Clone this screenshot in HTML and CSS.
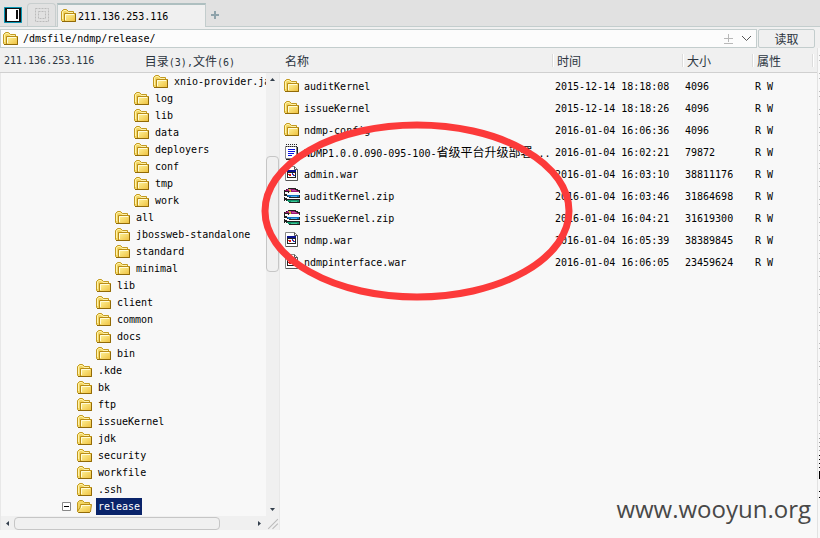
FILE: index.html
```html
<!DOCTYPE html>
<html lang="zh-CN">
<head>
<meta charset="utf-8">
<title>211.136.253.116</title>
<link rel="stylesheet" href="styles.css">
</head>
<body>
<svg class="defs" aria-hidden="true">
  <defs>
    <linearGradient id="gold" x1="0" y1="0" x2="1" y2="1"><stop offset="0" stop-color="#fff6a0"/><stop offset="1" stop-color="#eebf3c"/></linearGradient>
    <symbol id="folder" viewBox="0 0 16 16">
      <path d="M.5 12.500V3.500L2.500 1.500H5.500L7.500 3.500H12.500V5.500H14.500V13.500H1.500Z" fill="#f2d562" stroke="#c39a20"/>
      <path d="M1.500 11V4L3 2.500H5L7 4.500H12" fill="none" stroke="#fff3ac"/>
      <path d="M3.500 5.500H14.500V13.500H3.500Z" fill="url(#gold)" stroke="#b98c14"/>
      <path d="M4.500 12V6.500H13" fill="none" stroke="#fffbd8"/>
      <path d="M1 13.500H14.500V6" fill="none" stroke="#916a08"/>
    </symbol>
    <symbol id="folder-open" viewBox="0 0 16 16">
      <path d="M.5 12.500V3.500L2.500 1.500H5.500L7.500 3.500H12.500V6" fill="#f2d562" stroke="#c39a20"/>
      <path d="M3.500 6.500V5.500H14.500L13.500 12.500L12.500 13.500H1.500L.5 12.500L3 8.500Z" fill="url(#gold)" stroke="#b98c14"/>
      <path d="M4.500 9V6.500H13" fill="none" stroke="#fffbd8"/>
      <path d="M1.500 13.500H12.500L13.500 12.500" fill="none" stroke="#916a08"/>
    </symbol>
    <symbol id="doc" viewBox="0 0 16 16">
      <path d="M1.500 2.500H12.500V12L10 14.500H1.500Z" fill="#fff" stroke="#888"/>
      <path d="M13.500 3V12L10.500 15.500H2" fill="none" stroke="#222"/>
      <path d="M2 .5H13M2 2.500H13" stroke="#222" stroke-dasharray="1 1"/>
      <path d="M4 5.500H11M4 7.500H11M4 9.500H10M4 11.500H8" stroke="#0a12e0"/>
    </symbol>
    <symbol id="war" viewBox="0 0 16 16">
      <path d="M1.500 .5H10.500L13.500 3.500V14.500H1.500Z" fill="#fff" stroke="#888"/>
      <path d="M10.500 .5V3.500H13.500V14.500H2" fill="none" stroke="#555"/>
      <path d="M3 4H12V12H3Z" fill="#222"/>
      <path d="M4 7H11V11H4Z" fill="#fff"/>
      <path d="M3 4H12V6H3Z" fill="#0a1290"/>
      <path d="M4 8H5V9H4ZM5 8H7V10H5ZM9 8H10V9H9Z" fill="#e01818"/>
      <path d="M8 7H9V9H8ZM9 9H11V10H9Z" fill="#1739c8"/>
    </symbol>
    <symbol id="rar" viewBox="0 0 16 16" shape-rendering="crispEdges">
      <path d="M0 2H2V1H4V0H12V1H14V2H16V5H4V4H2V5H1V6H3V7H16V10H4V9H1V10H3V11H16V15H5V14H2V13H0V9H1V8H0Z" fill="#222"/>
      <path d="M1 2H3V1H11V2H13V3H15V4H5V3H1Z" fill="#9c1870"/>
      <path d="M5 7H15V9H5L2 7Z" fill="#1070c0"/>
      <path d="M5 12H15V14H5L2 12Z" fill="#109068"/>
      <path d="M5 4H15V5H5ZM1 4H2V5H4V6H2ZM1 8H3V9H5V10H2V9H1ZM1 12H2V13H4V14H2Z" fill="#fff"/>
      <path d="M4 1H7V2H4ZM8 2H12V3H8Z" fill="#c850a0"/>
      <path d="M7 8H13V9H7Z" fill="#50b0f0"/><path d="M7 13H13V14H7Z" fill="#40c898"/>
      <path d="M5 1H6V2H7V4H6V3H5Z" fill="#d8c020"/>
    </symbol>
  </defs>
</svg>

<header class="tabs">
  <button class="panel-btn" aria-label="切换面板"><svg width="18" height="16" viewBox="0 0 18 16"><path d="M.5 .5H17.500V15.500H.5Z" fill="#111" stroke="#0797b5"/><path d="M3 2H15V14H3Z" fill="#fff"/><path d="M13 3V12" stroke="#111" stroke-width="2"/></svg></button>
  <button class="ghost-tab" aria-label="列表"><svg width="14" height="14" viewBox="0 0 14 14" fill="none" stroke="#bbb"><path d="M.5 .5H13.500V13.500H.5Z" stroke-dasharray="2 1"/><path d="M3.500 3.500H10.500V10.500H3.500Z" stroke-dasharray="2 1"/></svg></button>
  <button class="tab"><svg class="icon"><use href="#folder"/></svg>211.136.253.116</button>
  <button class="add" aria-label="新标签"><svg width="8" height="8" viewBox="0 0 8 8"><path d="M0 4H8M4 0V8" stroke="#8fa3ab" stroke-width="2"/></svg></button>
</header>

<form class="address">
  <label class="path"><svg class="icon"><use href="#folder"/></svg><input type="text" value="/dmsfile/ndmp/release/" aria-label="路径">
    <svg width="9" height="10" viewBox="0 0 9 10"><path d="M0 4.500H9M4.500 0V8M0 9.500H9" stroke="#b8b8b8"/></svg>
    <svg width="9" height="5" viewBox="0 0 9 5"><path d="M0 0L4.500 4.500L9 0" fill="none" stroke="#555"/></svg>
  </label>
  <button type="button" class="read">读取</button>
</form>

<main class="panes">
  <section class="side">
    <div class="side-head"><span>211.136.253.116</span><span class="count"><b>目录</b>(3),<b>文件</b>(6)</span></div>
    <div class="side-body">
      <ul class="tree">
        <li class="d5"><svg class="icon"><use href="#folder"/></svg><span>xnio-provider.jar</span></li>
        <li class="d4"><svg class="icon"><use href="#folder"/></svg><span>log</span></li>
        <li class="d4"><svg class="icon"><use href="#folder"/></svg><span>lib</span></li>
        <li class="d4"><svg class="icon"><use href="#folder"/></svg><span>data</span></li>
        <li class="d4"><svg class="icon"><use href="#folder"/></svg><span>deployers</span></li>
        <li class="d4"><svg class="icon"><use href="#folder"/></svg><span>conf</span></li>
        <li class="d4"><svg class="icon"><use href="#folder"/></svg><span>tmp</span></li>
        <li class="d4"><svg class="icon"><use href="#folder"/></svg><span>work</span></li>
        <li class="d3"><svg class="icon"><use href="#folder"/></svg><span>all</span></li>
        <li class="d3"><svg class="icon"><use href="#folder"/></svg><span>jbossweb-standalone</span></li>
        <li class="d3"><svg class="icon"><use href="#folder"/></svg><span>standard</span></li>
        <li class="d3"><svg class="icon"><use href="#folder"/></svg><span>minimal</span></li>
        <li class="d2"><svg class="icon"><use href="#folder"/></svg><span>lib</span></li>
        <li class="d2"><svg class="icon"><use href="#folder"/></svg><span>client</span></li>
        <li class="d2"><svg class="icon"><use href="#folder"/></svg><span>common</span></li>
        <li class="d2"><svg class="icon"><use href="#folder"/></svg><span>docs</span></li>
        <li class="d2"><svg class="icon"><use href="#folder"/></svg><span>bin</span></li>
        <li class="d1"><svg class="icon"><use href="#folder"/></svg><span>.kde</span></li>
        <li class="d1"><svg class="icon"><use href="#folder"/></svg><span>bk</span></li>
        <li class="d1"><svg class="icon"><use href="#folder"/></svg><span>ftp</span></li>
        <li class="d1"><svg class="icon"><use href="#folder"/></svg><span>issueKernel</span></li>
        <li class="d1"><svg class="icon"><use href="#folder"/></svg><span>jdk</span></li>
        <li class="d1"><svg class="icon"><use href="#folder"/></svg><span>security</span></li>
        <li class="d1"><svg class="icon"><use href="#folder"/></svg><span>workfile</span></li>
        <li class="d1"><svg class="icon"><use href="#folder"/></svg><span>.ssh</span></li>
        <li class="d0"><svg class="minus" viewBox="0 0 9 9"><path d="M.5 .5H8.500V8.500H.5Z" fill="#fff" stroke="#888"/><path d="M2 4.500H7" stroke="#000"/></svg><svg class="icon"><use href="#folder-open"/></svg><span class="selected">release</span></li>
      </ul>
      <div class="vbar">
        <svg width="5" height="3" viewBox="0 0 5 3"><path d="M0 3L2.500 0L5 3Z" fill="#333f4c"/></svg>
        <i class="before"></i><i class="thumb"></i><i class="after"></i>
        <svg width="5" height="3" viewBox="0 0 5 3"><path d="M0 0H5L2.500 3Z" fill="#333f4c"/></svg>
      </div>
      <div class="hbar">
        <svg width="3" height="5" viewBox="0 0 3 5"><path d="M3 0V5L0 2.500Z" fill="#333f4c"/></svg>
        <i class="thumb"></i><i class="after"></i>
        <svg width="3" height="5" viewBox="0 0 3 5"><path d="M0 0V5L3 2.500Z" fill="#333f4c"/></svg>
      </div>
      <svg class="grip" viewBox="0 0 12 13"><path d="M2 12L11 3M6 12L11 7" stroke="#bbb"/></svg>
    </div>
  </section>

  <section class="files">
    <table>
      <colgroup><col><col class="c-time"><col class="c-size"><col class="c-attr"></colgroup>
      <thead><tr><th>名称</th><th>时间</th><th>大小</th><th>属性</th></tr></thead>
      <tbody>
        <tr><td><div class="name"><svg class="icon"><use href="#folder"/></svg>auditKernel</div></td><td>2015-12-14 18:18:08</td><td>4096</td><td>R W</td></tr>
        <tr><td><div class="name"><svg class="icon"><use href="#folder"/></svg>issueKernel</div></td><td>2015-12-14 18:18:26</td><td>4096</td><td>R W</td></tr>
        <tr><td><div class="name"><svg class="icon"><use href="#folder"/></svg>ndmp-config</div></td><td>2016-01-04 16:06:36</td><td>4096</td><td>R W</td></tr>
        <tr><td><div class="name"><svg class="icon"><use href="#doc"/></svg><span>NDMP1.0.0.090-095-100-<b>省级平台升级部署</b>...</span></div></td><td>2016-01-04 16:02:21</td><td>79872</td><td>R W</td></tr>
        <tr><td><div class="name"><svg class="icon"><use href="#war"/></svg>admin.war</div></td><td>2016-01-04 16:03:10</td><td>38811176</td><td>R W</td></tr>
        <tr><td><div class="name"><svg class="icon"><use href="#rar"/></svg>auditKernel.zip</div></td><td>2016-01-04 16:03:46</td><td>31864698</td><td>R W</td></tr>
        <tr><td><div class="name"><svg class="icon"><use href="#rar"/></svg>issueKernel.zip</div></td><td>2016-01-04 16:04:21</td><td>31619300</td><td>R W</td></tr>
        <tr><td><div class="name"><svg class="icon"><use href="#war"/></svg>ndmp.war</div></td><td>2016-01-04 16:05:39</td><td>38389845</td><td>R W</td></tr>
        <tr><td><div class="name"><svg class="icon"><use href="#war"/></svg>ndmpinterface.war</div></td><td>2016-01-04 16:06:05</td><td>23459624</td><td>R W</td></tr>
      </tbody>
    </table>
    <svg class="ring" viewBox="0 0 312 180"><ellipse cx="156" cy="90" rx="152" ry="86" fill="none" stroke="#fc3a3a" stroke-width="7"/></svg>
    <div class="watermark">www.wooyun.org</div>
  </section>
  <svg class="neighbour" width="2" height="490" viewBox="0 0 2 490" aria-hidden="true">
    <path d="M1.500 7V390" stroke="#bbb" stroke-dasharray="1 4 1 12"/>
    <path d="M1.500 390V406" stroke="#999" stroke-dasharray="1 3"/>
    <path d="M1.500 407V420" stroke="#000" stroke-dasharray="1 3"/>
    <path d="M1.500 423V431M1.500 443V444M1.500 449V450" stroke="#000"/>
  </svg>
</main>
</body>
</html>
```
FILE: styles.css
```css
* { box-sizing: border-box; }
body {
  margin: 0;
  min-height: 100vh;
  display: flex;
  flex-direction: column;
  background: #f8f8f8;
  color: #000;
  font: 10px/17px "DejaVu Sans Mono", "Noto Sans CJK SC", monospace;
  overflow: hidden;
}
button, input { font: inherit; color: inherit; border: 0; padding: 0; margin: 0; background: none; }
b, .read, th { font-family: "Noto Sans CJK SC", sans-serif; font-size: 12px; font-weight: 400; }
svg { display: block; flex: none; }
.defs { position: absolute; width: 0; height: 0; }
.icon { width: 16px; height: 16px; }

.tabs { display: flex; height: 27px; background: #e1e1e1; border-bottom: 1px solid #c3cdcd; align-items: flex-end; }
.panel-btn { margin: 0 5px 3px 4px; }
.ghost-tab { width: 29px; height: 23px; border: 1px solid #c8cece; border-bottom: 0; border-radius: 4px 4px 0 0; display: flex; align-items: center; justify-content: center; margin-right: 1px; }
.tab { display: flex; align-items: center; width: 149px; height: 24px; margin-bottom: -1px; padding-left: 3px; gap: 1px; background: #f0f0f0; border: 1px solid #c3cdcd; border-top: 2px solid #aebfc0; border-bottom: 0; }
.add { margin: 0 0 7px 5px; }

.address { display: flex; gap: 1px; padding: 2px 5px 0 0; background: #f0f0f0; }
.path { flex: 1; display: flex; align-items: center; height: 19px; padding: 0 5px 0 2px; gap: 4px; border: 1px solid #c3cdcd; background: #fcfcfc; }
.path input { flex: 1; min-width: 0; outline: 0; }
.path svg + svg { margin-left: 5px; }
.read { width: 57px; height: 19px; border: 1px solid #c3cdcd; border-radius: 2px; color: #2c3540; line-height: 16px; }

.panes { flex: 1; display: grid; grid-template-columns: 280px 1fr 2px; }
.side { display: flex; flex-direction: column; min-width: 0; }
.side-head { display: flex; justify-content: space-between; height: 25px; padding: 0 45px 0 4px; line-height: 26px; background: #f0f0f0; border-bottom: 1px solid #d0d0d0; color: #2c3540; }
.side-body { display: grid; grid-template-columns: 1fr 13px; border-left: 1px solid #e8e8e8; border-right: 1px solid #e8e8e8; }
.tree { margin: 0; padding: 0 0 1px; list-style: none; overflow: hidden; }
.tree li { display: flex; align-items: center; height: 17px; gap: 3px; white-space: nowrap; }
.tree span { padding: 0 2px; }
.d5 { padding-left: 152px; } .d4 { padding-left: 133px; } .d3 { padding-left: 114px; }
.d2 { padding-left: 95px; } .d1 { padding-left: 76px; } .d0 { padding-left: 61px; }
.minus { width: 9px; height: 9px; margin-right: 3px; }
.tree .selected { background: #0a246a; color: #fff; }
.vbar, .hbar { display: flex; align-items: center; background: #f0f0f0; }
.vbar { flex-direction: column; padding: 5px 0; }
.vbar .before { flex: 75; }
.vbar .thumb { flex: 114; width: 13px; }
.vbar .after { flex: 236; }
.thumb { border: 1px solid #c6c6c6; border-radius: 4px; background: #f0f0f0; }
.hbar { height: 14px; padding: 0 5px; gap: 5px; }
.hbar .thumb { flex: 206; height: 13px; }
.hbar .after { flex: 28; }
.grip { width: 13px; height: 14px; background: #f0f0f0; }

.files { position: relative; display: flex; flex-direction: column; border-right: 1px solid #e2e2e2; }
table { width: 100%; table-layout: fixed; border-collapse: separate; border-spacing: 0; }
.c-time { width: 130px; } .c-size { width: 70px; } .c-attr { width: 65px; }
th { height: 25px; padding: 0 5px; text-align: left; color: #2c3540; border-bottom: 1px solid #d0d0d0; background: linear-gradient(90deg, #dcdcdc 50%, #fff 50%) 0 center / 2px 13px no-repeat #f0f0f0; }
th:first-child { background: #f0f0f0; }
th:last-child { background: linear-gradient(90deg, #dcdcdc 50%, #fff 50%) 0 center / 2px 13px no-repeat, linear-gradient(90deg, #dcdcdc 50%, #fff 50%) 60px center / 2px 13px no-repeat #f0f0f0; }
td { height: 22px; padding: 0 3px; white-space: nowrap; }
tbody::before { content: ""; display: block; height: 2px; }
td:first-child { padding: 0 0 0 4px; }
.name { display: flex; align-items: center; gap: 4px; }
.ring { position: absolute; left: -19px; top: 73px; width: 312px; height: 180px; pointer-events: none; }
.watermark { margin: auto 6px 13px auto; font: 24px/32px "Open Sans", sans-serif; color: #484848; }
```
